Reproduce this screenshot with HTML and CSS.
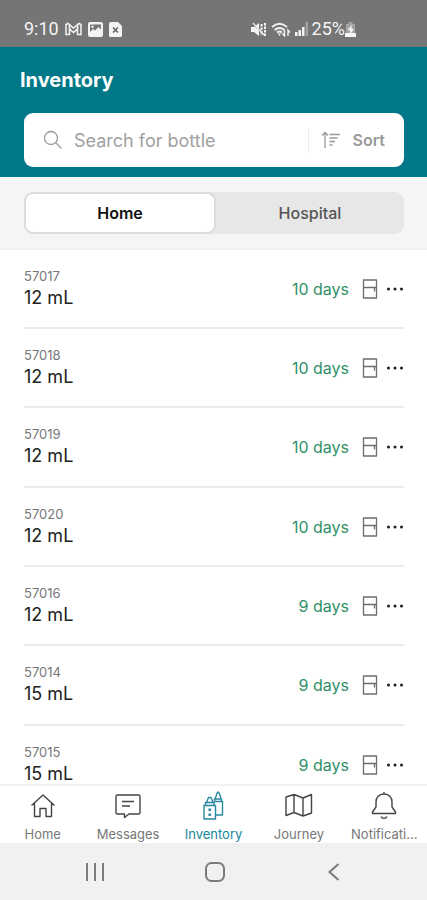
FILE: index.html
```html
<!DOCTYPE html>
<html lang="en">
<head>
<meta charset="utf-8">
<meta name="viewport" content="width=device-width, initial-scale=1">
<title>Inventory</title>
<link rel="stylesheet" href="styles.css">
</head>
<body>
<svg class="sprite" aria-hidden="true">
  <symbol id="fridge" viewBox="0 0 16 20">
    <path d="M1.500 1h13v18h-13zM1.500 8.500h13M12.500 8.500v4" fill="none" stroke="#6c6c6c" stroke-width="1.300" stroke-linejoin="round"/>
  </symbol>
  <symbol id="dots" viewBox="0 0 18 6">
    <g fill="#1c1c1c"><circle cx="2.500" cy="3" r="1.500"/><circle cx="9" cy="3" r="1.500"/><circle cx="15.500" cy="3" r="1.500"/></g>
  </symbol>
</svg>
<div class="app">
  <div class="status">
    <div class="status-group">
      <span>9:10</span>
      <svg width="17" height="14" viewBox="0 0 17 14" fill="none" stroke="#f4f4f4" stroke-width="1.500"><path d="M1 12.500V2.500l2-1 5.500 4.500L14 1.500l2 1v10h-3.500V7l-4 3.500L4.500 7v5.500z"/><path d="M4.500 3v4M12.500 3v4"/></svg>
      <svg width="15" height="15" viewBox="0 0 15 15"><rect width="15" height="15" rx="2" fill="#f4f4f4"/><path d="M2 2.500h11v5L10.500 5 7 8.500 5 7 2 10z" fill="#757575"/><circle cx="4.500" cy="4.800" r="1.200" fill="#f4f4f4"/></svg>
      <svg width="13" height="15" viewBox="0 0 13 15"><path d="M2 0h7l4 4v9.500a1.500 1.500 0 0 1-1.500 1.500h-10A1.500 1.500 0 0 1 0 13.500V2a2 2 0 0 1 2-2z" fill="#f4f4f4"/><path d="M4 5.500l5 5M9 5.500l-5 5" stroke="#606060" stroke-width="1.500"/></svg>
    </div>
    <div class="status-group signals">
      <svg width="16" height="15" viewBox="0 0 16 15"><path d="M0 5h3l5-4v13l-5-4H0z" fill="#f4f4f4"/><path d="M1 1l12 12.500" stroke="#757575" stroke-width="1"/><path d="M2 1l11 12" stroke="#f4f4f4" stroke-width="1.200"/><path d="M10.500 2v11M14 1v13" stroke="#f4f4f4" stroke-width="2" stroke-dasharray="2.500 1"/></svg>
      <svg width="20" height="15" viewBox="0 0 20 15"><path d="M1 5Q8.500-1.500 16 5M3.500 8q5-4 10 0M6 10.500q2.500-2 5 0" fill="none" stroke="#f4f4f4" stroke-width="1.800"/><path d="M7 11.500h3l-1.500 2.500z" fill="#f4f4f4"/><path d="M13.500 8v6l-2-2.500M17 14V8l2 2.500" fill="none" stroke="#f4f4f4" stroke-width="1.400"/></svg>
      <svg width="13" height="14" viewBox="0 0 13 14"><path d="M0 10h2.500v4H0zM3.500 8H6v6H3.500zM7 5h2.500v9H7z" fill="#f4f4f4"/><path d="M10.500 0H13v14h-2.500z" fill="#a0a0a0"/></svg>
      <span class="battery">25%<svg width="11" height="15" viewBox="0 0 11 15"><path d="M3.500 0h4v2H10v9H1V2h2.500z" fill="#a5a5a5"/><path d="M0 11h11v4H0z" fill="#f4f4f4"/><path d="M7 3L2.500 8H5v4l4-5H6.500z" fill="#f4f4f4"/></svg></span>
    </div>
  </div>
  <header class="header">
    <h1>Inventory</h1>
    <div class="search">
      <label for="search"><svg width="20" height="20" viewBox="0 0 20 20" fill="none" stroke="#999" stroke-width="1.300" stroke-linecap="round" role="img" aria-label="Search"><circle cx="8" cy="8" r="6.500"/><path d="M13 13l5 5"/></svg></label>
      <input id="search" type="text" placeholder="Search for bottle">
      <button class="sort" type="button"><svg width="20" height="18" viewBox="0 0 20 18" fill="none" stroke="#999" stroke-width="1.300"><path d="M4 17V1.500M1 4.500l3-3 3 3M8.500 3.500H19M8.500 7h8M8.500 10.500H14M8.500 14h3"/></svg>Sort</button>
    </div>
  </header>
  <div class="filter">
    <div class="segments">
      <button class="segment selected" type="button" aria-pressed="true">Home</button>
      <button class="segment" type="button" aria-pressed="false">Hospital</button>
    </div>
  </div>
  <main class="content">
    <ul class="bottles">
      <li><div class="bottle"><small>57017</small><span>12 mL</span></div><span class="days">10 days</span><svg class="fridge"><use href="#fridge"/></svg><button class="more" type="button" aria-label="More"><svg><use href="#dots"/></svg></button></li>
      <li><div class="bottle"><small>57018</small><span>12 mL</span></div><span class="days">10 days</span><svg class="fridge"><use href="#fridge"/></svg><button class="more" type="button" aria-label="More"><svg><use href="#dots"/></svg></button></li>
      <li><div class="bottle"><small>57019</small><span>12 mL</span></div><span class="days">10 days</span><svg class="fridge"><use href="#fridge"/></svg><button class="more" type="button" aria-label="More"><svg><use href="#dots"/></svg></button></li>
      <li><div class="bottle"><small>57020</small><span>12 mL</span></div><span class="days">10 days</span><svg class="fridge"><use href="#fridge"/></svg><button class="more" type="button" aria-label="More"><svg><use href="#dots"/></svg></button></li>
      <li><div class="bottle"><small>57016</small><span>12 mL</span></div><span class="days">9 days</span><svg class="fridge"><use href="#fridge"/></svg><button class="more" type="button" aria-label="More"><svg><use href="#dots"/></svg></button></li>
      <li><div class="bottle"><small>57014</small><span>15 mL</span></div><span class="days">9 days</span><svg class="fridge"><use href="#fridge"/></svg><button class="more" type="button" aria-label="More"><svg><use href="#dots"/></svg></button></li>
      <li><div class="bottle"><small>57015</small><span>15 mL</span></div><span class="days">9 days</span><svg class="fridge"><use href="#fridge"/></svg><button class="more" type="button" aria-label="More"><svg><use href="#dots"/></svg></button></li>
    </ul>
  </main>
  <nav class="tabs">
    <a href="#home"><svg viewBox="0 0 28 30"><path d="M2.500 15.500L14 5l11.500 10.500M5.500 13v13.500h5.500v-8h6v8h5.500V13"/></svg><span>Home</span></a>
    <a href="#messages"><svg viewBox="0 0 28 30"><path d="M3.500 5h21a1.500 1.500 0 0 1 1.500 1.500v16a1.500 1.500 0 0 1-1.500 1.500H15l-4.500 3.500V24h-7A1.500 1.500 0 0 1 2 22.500v-16A1.500 1.500 0 0 1 3.500 5zM8 11.500h12M8 16h8"/></svg><span>Messages</span></a>
    <a href="#inventory" class="active" aria-current="page"><svg viewBox="0 0 28 30"><path d="M5 15.500h11.500V29H5zM6.500 15.500v-3h8.500v3M7.500 12.500l2-5h2.500l2 5M15.500 11.500h8V25h-7M15.500 11.500V9h7v2.500M16 9l2-5.500L19 2l1.500 1.500L22 9"/><path d="M10.700 18.500v2.500M10.700 23.500v2.500" stroke-width="2.500"/></svg><span>Inventory</span></a>
    <a href="#journey"><svg viewBox="0 0 28 30"><path d="M1 7l8-2.500 9 3.500 8.500-3.500V23L18 26l-9-3.500L1 25.500zM9 4.500v18M18 8v18"/></svg><span>Journey</span></a>
    <a href="#notifications"><svg viewBox="0 0 28 30"><path d="M14 2v2M14 4c-5 0-8 3.500-8 8v5l-3.500 5v1.500h23V22L22 17v-5c0-4.500-3-8-8-8zM11 26.500c1 2.500 5 2.500 6 0"/></svg><span>Notificati...</span></a>
  </nav>
  <div class="system">
    <button type="button" aria-label="Recent apps"><svg viewBox="0 0 20 20"><path d="M2 1v18M10 1v18M18 1v18"/></svg></button>
    <button type="button" aria-label="Home screen"><svg viewBox="0 0 20 20"><rect x="1" y="1" width="18" height="18" rx="5.500"/></svg></button>
    <button type="button" aria-label="Back"><svg viewBox="0 0 20 20"><path d="M14.500 2l-9 8 9 8"/></svg></button>
  </div>
</div>
</body>
</html>
```
FILE: styles.css
```css
* { box-sizing: border-box; }
body { margin: 0; font-family: Inter, "Liberation Sans", sans-serif; color: #222; background: #fff; }
button, input { font: inherit; border: 0; background: none; padding: 0; margin: 0; }
svg { display: block; flex: none; }
.sprite { position: absolute; width: 0; height: 0; }
.app { display: flex; flex-direction: column; height: 100vh; }

.status { display: flex; align-items: center; justify-content: space-between; padding: 11px 71px 0 24px; height: 47px; background: #757575; color: #f4f4f4; font: 18px/20px Roboto, sans-serif; }
.status-group { display: flex; align-items: center; gap: 6px; }
.signals { gap: 4px; }
.battery { display: flex; align-items: center; }

.header { padding: 20px 23px 10px 24px; background: #007887; }
.header h1 { margin: 0 0 19px -4px; font-size: 20px; line-height: 27px; font-weight: 700; color: #fff; }
.search { display: flex; align-items: center; height: 54px; padding: 0 19px; border-radius: 9px; background: #fff; }
.search input { flex: 1; min-width: 0; height: 40px; margin-left: 11px; font-size: 18px; color: #333; outline: 0; }
.search input::placeholder { color: #a0a0a0; opacity: 1; }
.sort { display: flex; align-items: center; gap: 12px; height: 25px; padding-left: 12px; border-left: 1px solid #eee; font-size: 16px; font-weight: 600; color: #999; }

.filter { padding: 15px 23px 15px 24px; background: #f5f5f5; border-bottom: 1px solid #eee; }
.segments { display: flex; height: 42px; border-radius: 9px; background: #e7e7e8; }
.segment { flex: 1; border-radius: 9px; font-size: 16px; font-weight: 500; color: #555; }
.segment.selected { background: #fff; border: 2px solid #dcdcdc; font-weight: 600; color: #111; }

.content { flex: 1; min-height: 0; overflow-y: auto; scrollbar-width: none; }
.bottles { list-style: none; margin: 0; padding: 0 23px 0 24px; }
.bottles li { display: flex; align-items: center; height: 79px; border-bottom: 2px solid #ebebeb; }
.bottles li:nth-child(3n) { height: 80px; }
.bottle { flex: 1; display: flex; flex-direction: column; font-size: 18px; line-height: 25px; }
.bottle small { font-size: 13px; line-height: 17px; color: #777; }
.days { font-size: 16px; color: #2f9068; }
.fridge { width: 16px; height: 20px; margin: 0 8px 0 13px; }
.more svg { width: 18px; height: 6px; }

.tabs { display: grid; grid-template-columns: repeat(5, minmax(0, 1fr)); height: 59px; border-top: 2px solid #f2f2f2; background: #fff; }
.tabs a { display: flex; flex-direction: column; align-items: center; gap: 5px; padding: 4px 4px 0; color: #777; font-size: 13px; line-height: 18px; text-decoration: none; }
.tabs span { white-space: nowrap; }
.tabs svg { width: 28px; height: 30px; fill: none; stroke: #444; stroke-width: 1.4; stroke-linejoin: round; }
.tabs .active { color: #16889c; }
.tabs .active svg { stroke: #2788a0; }

.system { display: flex; align-items: center; justify-content: space-between; height: 57px; padding: 0 83px 0 85px; background: #f1f1f1; }
.system svg { width: 20px; height: 20px; fill: none; stroke: #7b7b7b; stroke-width: 2; }
```
